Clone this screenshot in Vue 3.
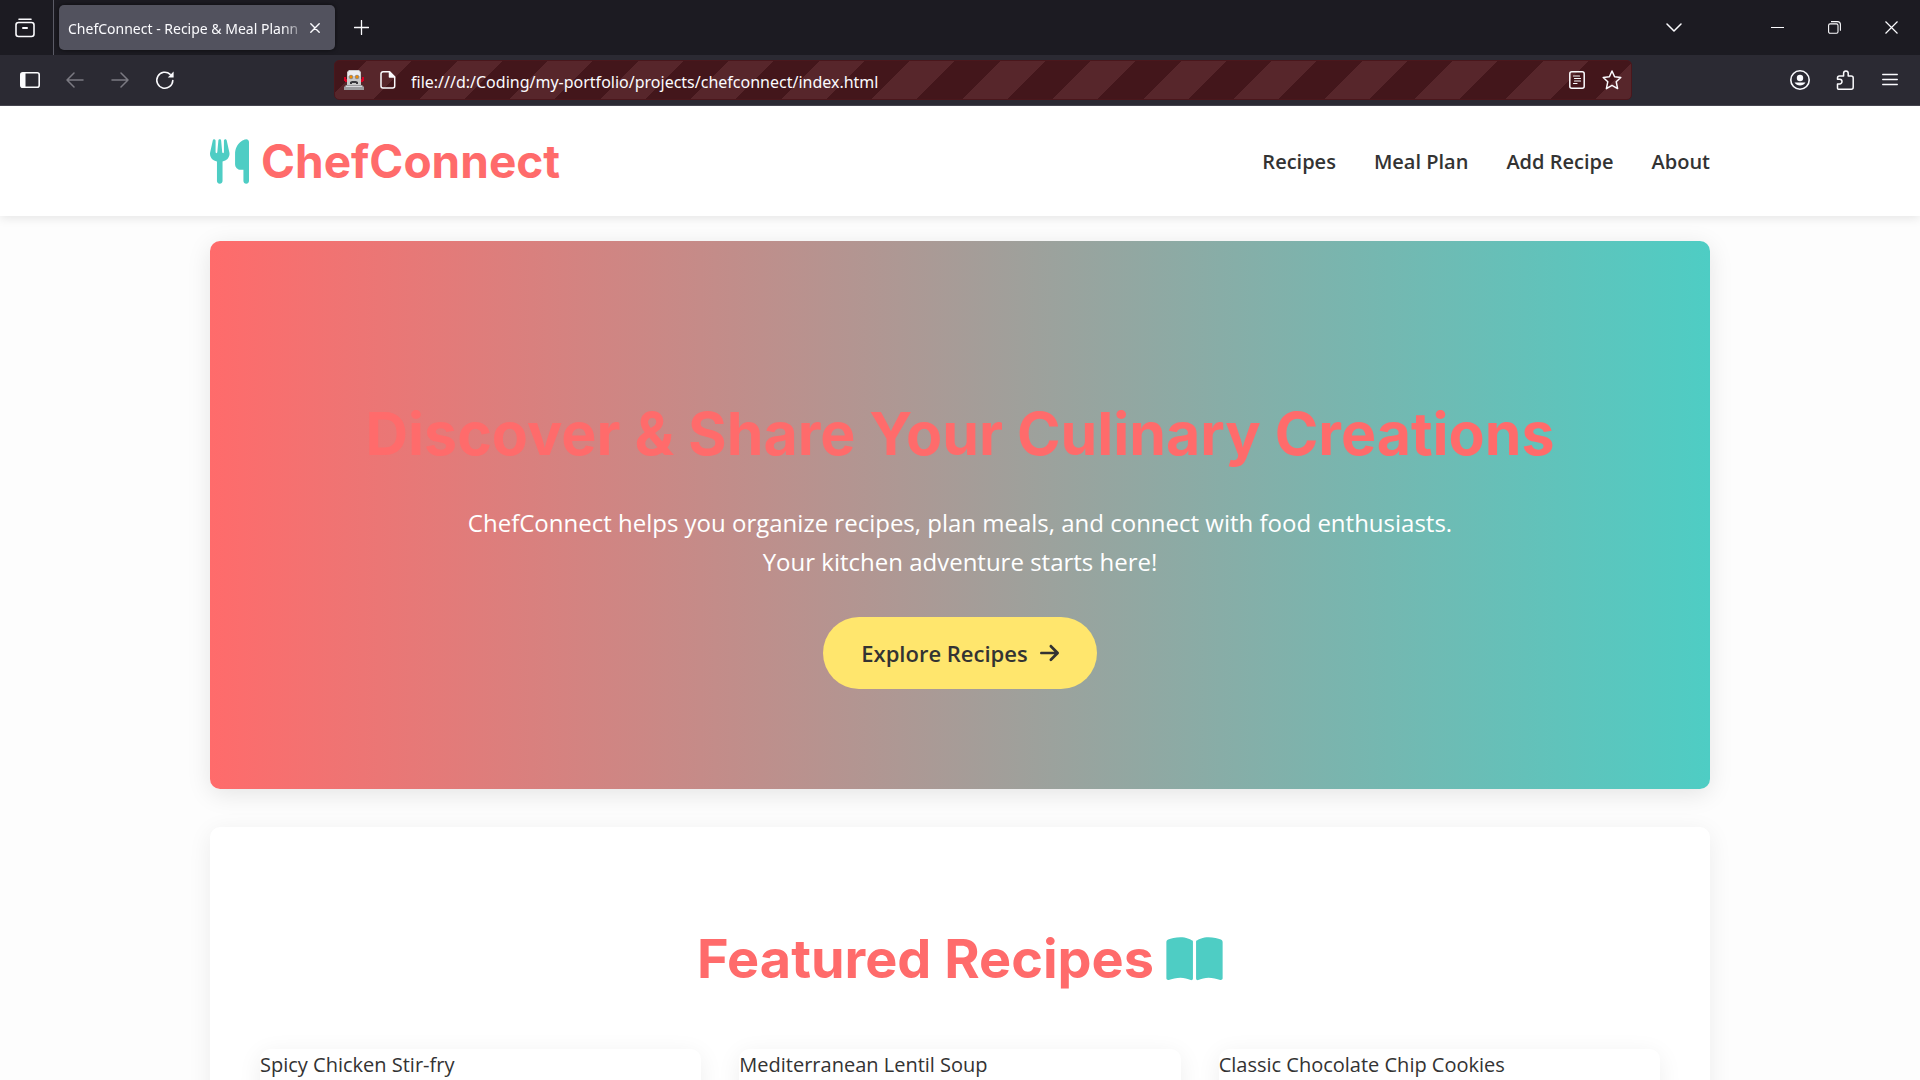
<script setup>
import { ref } from 'vue'

const address = ref('file:///d:/Coding/my-portfolio/projects/chefconnect/index.html')
const links = ['Recipes', 'Meal Plan', 'Add Recipe', 'About']
const recipes = [
  'Spicy Chicken Stir-fry',
  'Mediterranean Lentil Soup',
  'Classic Chocolate Chip Cookies',
]
</script>

<template>
  <div class="window">
    <div class="tabbar">
      <button class="view-btn" aria-label="Recent browsing">
        <svg width="20" height="20" viewBox="0 0 20 20" fill="none" stroke="currentColor" stroke-width="1.6" stroke-linecap="round">
          <path d="M4 1.2h12" />
          <rect x="1" y="4.5" width="18" height="14" rx="2.5" />
          <path d="M8 10h4" stroke-width="2" />
        </svg>
      </button>
      <div class="tab">
        <span class="tab-title">ChefConnect - Recipe &amp; Meal Plann</span>
        <button class="tab-close" aria-label="Close tab">
          <svg width="10" height="10" viewBox="0 0 10 10" stroke="currentColor" stroke-width="1.4" stroke-linecap="round"><path d="M.8.8l8.4 8.4M9.2.8L.8 9.2" /></svg>
        </button>
      </div>
      <button class="new-tab" aria-label="New tab">
        <svg width="15" height="15" viewBox="0 0 15 15" stroke="currentColor" stroke-width="1.3" stroke-linecap="round"><path d="M7.5.5v14M.5 7.5h14" /></svg>
      </button>
      <div class="spacer"></div>
      <button class="list-tabs" aria-label="List all tabs">
        <svg width="16" height="10" viewBox="0 0 16 10" fill="none" stroke="currentColor" stroke-width="1.5" stroke-linecap="round" stroke-linejoin="round"><path d="M1 1l7 7 7-7" /></svg>
      </button>
      <button class="win-btn" aria-label="Minimize">
        <svg width="13" height="13" viewBox="0 0 13 13" stroke="currentColor" stroke-width="1"><path d="M0 6.5h13" /></svg>
      </button>
      <button class="win-btn" aria-label="Restore">
        <svg width="13" height="13" viewBox="0 0 13 13" fill="none" stroke="currentColor" stroke-width="1.1"><rect x=".6" y="2.9" width="9.4" height="9.4" rx="1.5" /><path d="M3 .6h6.4a3 3 0 0 1 3 3v6.2" /></svg>
      </button>
      <button class="win-btn" aria-label="Close">
        <svg width="13" height="13" viewBox="0 0 13 13" stroke="currentColor" stroke-width="1.2"><path d="M.5.5l12 12M12.5.5l-12 12" /></svg>
      </button>
    </div>

    <div class="toolbar">
      <button class="tool" aria-label="Sidebar">
        <svg width="20" height="16" viewBox="0 0 20 16" fill="none" stroke="currentColor" stroke-width="1.6"><rect x=".8" y=".8" width="18.4" height="14.4" rx="2" /><path d="M1 1h4.5v14H1z" fill="currentColor" stroke="none" /></svg>
      </button>
      <button class="tool" aria-label="Back" disabled>
        <svg width="18" height="16" viewBox="0 0 18 16" fill="none" stroke="currentColor" stroke-width="1.5" stroke-linecap="round" stroke-linejoin="round"><path d="M17 8H1M8 1L1 8l7 7" /></svg>
      </button>
      <button class="tool" aria-label="Forward" disabled>
        <svg width="18" height="16" viewBox="0 0 18 16" fill="none" stroke="currentColor" stroke-width="1.5" stroke-linecap="round" stroke-linejoin="round"><path d="M1 8h16M10 1l7 7-7 7" /></svg>
      </button>
      <button class="tool" aria-label="Reload">
        <svg width="20" height="20" viewBox="0 0 20 20" fill="none" stroke="currentColor" stroke-width="1.6" stroke-linecap="round"><path d="M17.8 10.5a8 8 0 1 1-2.6-6.2" /><path d="M18.6 1.6v5.8h-5.8z" fill="currentColor" stroke="none" /></svg>
      </button>

      <div class="urlbar">
        <svg width="20" height="20" viewBox="0 0 20 20">
          <path d="M0 7h2v4H0zM18 7h2v4h-2zM1 9h3v3H1zM16 9h3v3h-3z" fill="#d70022" />
          <path d="M5 0h10l2 2v13H3V2z" fill="#c9c9c9" />
          <path d="M5 1h10l1 2v3H4V3z" fill="#ededf0" />
          <circle cx="7" cy="7" r="2.2" fill="#8a8a8d" /><circle cx="13" cy="7" r="2.2" fill="#8a8a8d" />
          <circle cx="7" cy="7" r="1.4" fill="#f28c00" /><circle cx="13" cy="7" r="1.4" fill="#f28c00" />
          <path d="M6 14v-2l2-1h4l2 1v2h-2v-1H8v1z" fill="#38383d" />
          <path d="M2 15h16l2 2v3H0v-3z" fill="#9b9b9e" /><path d="M2 16h16v1H2z" fill="#d7d7db" />
        </svg>
        <svg class="page-icon" width="16" height="18" viewBox="0 0 16 18" fill="none" stroke="currentColor" stroke-width="1.5" stroke-linejoin="round"><path d="M3 .8h6.5l5.2 5.2v9a2 2 0 0 1-2 2H3a2 2 0 0 1-2-2V2.8a2 2 0 0 1 2-2z" /><path d="M9.5 1v5h5z" fill="currentColor" /></svg>
        <input v-model="address" class="address" type="text" aria-label="Address" spellcheck="false" />
        <button class="bar-btn" aria-label="Reader view">
          <svg width="16" height="18" viewBox="0 0 16 18" fill="none" stroke="currentColor" stroke-width="1.5" stroke-linecap="round"><rect x=".8" y=".8" width="14.4" height="16.4" rx="2" /><path d="M4.5 5h6M5.5 7.5h6M5.5 10h6M4.5 12.500h3.500" stroke-width="1.200" /></svg>
        </button>
        <button class="bar-btn" aria-label="Bookmark">
          <svg width="20" height="20" viewBox="0 0 20 20" fill="none" stroke="currentColor" stroke-width="1.5" stroke-linejoin="round"><path d="M10 1l2.600 5.800 6.200.7-4.600 4.200 1.400 6.900L10 15.300l-5.600 3.300 1.400-6.900L1.200 7.500l6.200-.7z" /></svg>
        </button>
      </div>

      <button class="tool" aria-label="Account">
        <svg width="20" height="20" viewBox="0 0 20 20" fill="none" stroke="currentColor" stroke-width="1.6"><circle cx="10" cy="10" r="9.200" /><circle cx="10" cy="8" r="3.200" fill="currentColor" stroke="none" /><path d="M4.500 12.500h11a6.500 6.500 0 0 1-11 0z" fill="currentColor" stroke="none" /></svg>
      </button>
      <button class="tool" aria-label="Extensions">
        <svg width="18" height="20" viewBox="0 0 18 20" fill="none" stroke="currentColor" stroke-width="1.500" stroke-linejoin="round"><path d="M2.500 19.200h12.700a2 2 0 0 0 2-2V8a2 2 0 0 0-2-2h-3V3.200a2.300 2.300 0 0 0-4.600 0V6H3.500a2 2 0 0 0-2 2v1.300h2.200a2.300 2.300 0 0 1 0 4.600H1.500v4.300a1 1 0 0 0 1 1z" /></svg>
      </button>
      <button class="tool" aria-label="Menu">
        <svg width="16" height="14" viewBox="0 0 16 14" stroke="currentColor" stroke-width="1.300" stroke-linecap="round"><path d="M.7 1.500h14.600M.7 6.500h14.600M.7 11.500h14.600" /></svg>
      </button>
    </div>

    <div class="page">
      <header class="site-header">
        <div class="container header-row">
          <a class="logo" href="#">
            <svg class="fa" viewBox="0 0 448 512" width="39" height="45"><path d="M416 0C400 0 288 32 288 176V288c0 35.300 28.700 64 64 64h32V480c0 17.700 14.300 32 32 32s32-14.300 32-32V352 240 32c0-17.700-14.300-32-32-32zM64 16C64 7.800 57.900 1 49.700 .1S34.200 4.600 32.400 12.500L2.100 148.800C.7 155.100 0 161.500 0 167.900c0 45.900 35.100 83.600 80 87.700V480c0 17.700 14.300 32 32 32s32-14.300 32-32V255.600c44.900-4.100 80-41.800 80-87.700c0-6.400-.7-12.800-2.100-19.100L191.600 12.500c-1.800-8-9.300-13.300-17.400-12.400S160 7.800 160 16V150.200c0 5.400-4.400 9.800-9.800 9.800c-5.100 0-9.300-3.900-9.800-9L127.900 14.600C127.200 6.300 120.300 0 112 0s-15.200 6.300-15.900 14.600L83.700 151c-.5 5.100-4.700 9-9.800 9c-5.400 0-9.800-4.400-9.800-9.800V16z" /></svg>
            <span>ChefConnect</span>
          </a>
          <nav class="nav">
            <a v-for="link in links" :key="link" href="#">{{ link }}</a>
          </nav>
        </div>
      </header>

      <main class="container main">
        <section class="hero">
          <h1>Discover &amp; Share Your Culinary Creations</h1>
          <p>ChefConnect helps you organize recipes, plan meals, and connect with food enthusiasts. Your kitchen adventure starts here!</p>
          <button class="cta">
            Explore Recipes
            <svg viewBox="0 0 448 512" width="19" height="22" fill="currentColor"><path d="M438.600 278.600c12.500-12.500 12.500-32.800 0-45.300l-160-160c-12.500-12.500-32.800-12.500-45.300 0s-12.500 32.800 0 45.300L338.800 224 32 224c-17.700 0-32 14.300-32 32s14.300 32 32 32l306.700 0L233.400 393.400c-12.500 12.500-12.500 32.800 0 45.300s32.800 12.500 45.300 0l160-160z" /></svg>
          </button>
        </section>

        <section class="featured">
          <h2>
            <span>Featured Recipes</span>
            <svg class="fa" viewBox="0 0 576 512" width="57" height="50"><path d="M249.600 471.500c10.800 3.800 22.400-4.100 22.400-15.500V78.600c0-4.200-1.600-8.400-5-11C247.400 52 202.400 32 144 32C93.500 32 46.300 45.300 18.100 56.100C6.800 60.500 0 71.700 0 83.800V454.100c0 11.900 12.800 20.200 24.100 16.500C55.600 460.100 105.500 448 144 448c33.900 0 79 14 105.600 23.500zm76.800 0C353 462 398.100 448 432 448c38.500 0 88.400 12.100 119.900 22.600c11.300 3.800 24.100-4.600 24.100-16.500V83.800c0-12.100-6.800-23.300-18.100-27.600C529.700 45.300 482.500 32 432 32c-58.400 0-103.400 20-123 35.600c-3.300 2.600-5 6.800-5 11V456c0 11.400 11.700 19.300 22.400 15.500z" /></svg>
          </h2>
          <div class="cards">
            <article v-for="name in recipes" :key="name" class="card">{{ name }}</article>
          </div>
        </section>
      </main>
    </div>
  </div>
</template>

<style>
body {
  margin: 0;
}
</style>

<style scoped>
* {
  box-sizing: border-box;
}

.window {
  display: flex;
  flex-direction: column;
  height: 100vh;
  font-family: "Open Sans", "Noto Sans", sans-serif;
  background: #fdfdfd;
}

svg {
  display: block;
  flex: none;
}

button {
  display: flex;
  align-items: center;
  justify-content: center;
  padding: 0;
  border: 0;
  background: none;
  color: inherit;
  font: inherit;
  cursor: pointer;
}

/* Browser chrome */
.tabbar {
  display: flex;
  flex: none;
  align-items: center;
  height: 55px;
  background: #1c1b22;
  color: #fbfbfe;
}

.view-btn {
  width: 54px;
  height: 55px;
  padding-right: 3px;
  border-right: 1px solid #5b5b66;
}

.tab {
  display: flex;
  align-items: center;
  width: 276px;
  height: 45px;
  margin-left: 5px;
  padding: 0 12px 0 9px;
  border-radius: 5px;
  background: #52525e;
  box-shadow: 0 0 4px rgba(0, 0, 0, 0.6);
}

.tab-title {
  flex: 1;
  min-width: 0;
  padding-top: 2px;
  overflow: hidden;
  font: 14px/20px "Noto Sans", "Open Sans", sans-serif;
  white-space: nowrap;
  mask-image: linear-gradient(to left, transparent, #000 24px);
}

.tab-close {
  width: 16px;
  height: 24px;
}

.new-tab {
  width: 53px;
  height: 45px;
}

.spacer {
  flex: 1;
}

.list-tabs {
  width: 50px;
  height: 45px;
  margin-right: 50px;
}

.win-btn {
  width: 57px;
  height: 55px;
}

.toolbar {
  display: flex;
  flex: none;
  align-items: center;
  height: 51px;
  padding: 0 8px 0 7px;
  border-bottom: 1px solid #45444e;
  background: #2b2a33;
  color: #fbfbfe;
}

.tool {
  flex: none;
  width: 45px;
  height: 40px;
}

.tool:disabled {
  color: #7b7a82;
}

.urlbar {
  display: flex;
  flex: 1;
  align-items: center;
  min-width: 0;
  height: 40px;
  margin: 0 145px 0 147px;
  padding: 0 9px;
  border: 1px solid #4a171c;
  border-radius: 5px;
  background: repeating-linear-gradient(-45deg, #57262b 0 25px, #43161b 25px 57px, #57262b 57px 64px);
}

.page-icon {
  margin-left: 16px;
}

.address {
  flex: 1;
  min-width: 0;
  margin-left: 15px;
  padding: 3px 0 0;
  border: 0;
  outline: 0;
  background: none;
  color: #fbfbfe;
  font: 16px/24px "Noto Sans", "Open Sans", sans-serif;
}

.bar-btn {
  width: 35px;
  height: 36px;
}

.bar-btn:last-child {
  width: 20px;
  margin-left: 8px;
}

/* Site */
.page {
  flex: 1;
  min-height: 0;
  overflow-y: auto;
  scrollbar-width: none;
  color: #333;
  font-size: 20px;
  line-height: 32px;
}

.container {
  max-width: 1500px;
  margin: 0 auto;
}

.site-header {
  background: #fff;
  box-shadow: 0 2px 10px rgba(0, 0, 0, 0.1);
}

.header-row {
  display: flex;
  align-items: center;
  justify-content: space-between;
  min-height: 110px;
}

.logo {
  display: flex;
  align-items: center;
  gap: 12px;
  color: #ff6b6b;
  font: 700 46px/72px "Inter", sans-serif;
  text-decoration: none;
}

.fa {
  fill: #4ecdc4;
}

.nav {
  display: flex;
  gap: 38px;
  padding-top: 2px;
}

.nav a {
  color: #333;
  font-weight: 600;
  text-decoration: none;
}

.main {
  padding-top: 25px;
}

.hero {
  display: flex;
  flex-direction: column;
  align-items: center;
  padding: 148px 50px 100px;
  border-radius: 10px;
  background: linear-gradient(to right, #ff6b6b, #4ecdc4);
  box-shadow: 0 5px 25px rgba(0, 0, 0, 0.1);
  color: #fff;
  text-align: center;
}

.hero h1 {
  margin: 0 0 24px;
  color: #ff6b6b;
  font: 700 59px/90px "Inter", sans-serif;
}

.hero p {
  max-width: 1000px;
  margin: 0 0 36px;
  font-size: 24px;
  line-height: 39px;
}

.cta {
  gap: 12px;
  height: 72px;
  padding: 0 38px;
  border-radius: 50px;
  background: #ffe66d;
  color: #333;
  font-size: 22px;
  font-weight: 600;
}

.featured {
  margin-top: 38px;
  padding: 92px 50px 50px;
  border-radius: 10px;
  background: #fff;
  box-shadow: 0 5px 25px rgba(0, 0, 0, 0.07);
}

.featured h2 {
  display: flex;
  align-items: center;
  justify-content: center;
  gap: 12px;
  margin: 0 0 50px;
  color: #ff6b6b;
  font: 700 54px/80px "Inter", sans-serif;
}

.cards {
  display: grid;
  grid-template-columns: repeat(3, 1fr);
  gap: 38px;
}

.card {
  min-height: 300px;
  border-radius: 10px;
  background: #fff;
  box-shadow: 0 5px 25px rgba(0, 0, 0, 0.07);
}
</style>
